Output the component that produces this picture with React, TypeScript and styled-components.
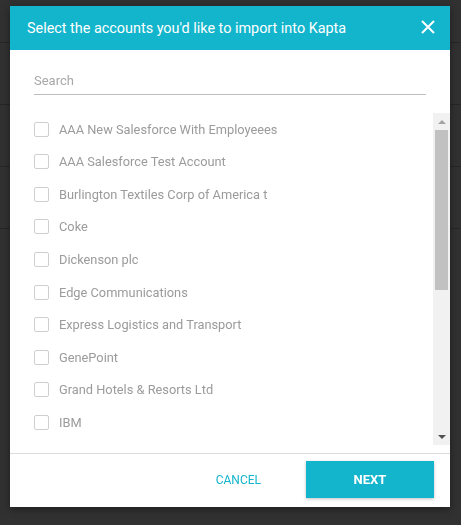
import React from 'react';
import styled, { createGlobalStyle } from 'styled-components';

const teal = '#13b5cc';

const GlobalStyle = createGlobalStyle`
  html, body {
    margin: 0;
    padding: 0;
    background: #313131;
    font-family: Roboto, 'Liberation Sans', Arial, sans-serif;
  }
  * {
    box-sizing: border-box;
  }
`;

const accounts = [
  'AAA New Salesforce With Employeees',
  'AAA Salesforce Test Account',
  'Burlington Textiles Corp of America t',
  'Coke',
  'Dickenson plc',
  'Edge Communications',
  'Express Logistics and Transport',
  'GenePoint',
  'Grand Hotels & Resorts Ltd',
  'IBM',
  'Pyramid Construction Inc.',
  'Sample Account for Entitlements',
  'United Oil & Gas Corp.',
  'United Oil & Gas, Singapore',
  'United Oil & Gas, UK',
  'University of Arizona',
  'sForce',
  'Test Account 2',
];

const App = (): JSX.Element => {
  return (
    <>
      <GlobalStyle />
      <Page>
        <PageBar />
        <PageRow />
        <PageRow />
        <PageRow />
      </Page>
      <Dialog>
        <Header>
          <Title>Select the accounts you'd like to import into Kapta</Title>
          <CloseButton aria-label="Close">
            <svg width="14" height="14" viewBox="0 0 14 14">
              <path d="M1 1 L13 13 M13 1 L1 13" stroke="#fff" strokeWidth="2" />
            </svg>
          </CloseButton>
        </Header>
        <SearchWrap>
          <SearchInput placeholder="Search" />
        </SearchWrap>
        <ListArea>
          <List>
            {accounts.map((name) => (
              <Row key={name}>
                <Check />
                <Label>{name}</Label>
              </Row>
            ))}
          </List>
          <ScrollTrack>
            <ScrollArrow $dir="up" />
            <ScrollThumbRail>
              <ScrollThumb />
            </ScrollThumbRail>
            <ScrollArrow $dir="down" />
          </ScrollTrack>
        </ListArea>
        <Footer>
          <CancelButton>Cancel</CancelButton>
          <NextButton>Next</NextButton>
        </Footer>
      </Dialog>
    </>
  );
};

export default App;

const Page = styled.div`
  height: 525px;
  display: flex;
  flex-direction: column;
`;

const PageBar = styled.div`
  height: 43px;
  border-bottom: 1px solid #262626;
`;

const PageRow = styled.div`
  height: 62px;
  border-bottom: 1px solid #262626;
`;

const Dialog = styled.div`
  position: fixed;
  left: 10px;
  top: 6px;
  width: 440px;
  height: 501px;
  background: #fff;
  display: flex;
  flex-direction: column;
  box-shadow: 0 2px 8px rgba(0, 0, 0, 0.4);
`;

const Header = styled.div`
  height: 44px;
  background: ${teal};
  display: flex;
  align-items: center;
  justify-content: space-between;
  padding: 0 14px 0 17px;
`;

const Title = styled.h2`
  margin: 0;
  color: #fff;
  font-size: 14.4px;
  font-weight: 400;
  letter-spacing: 0;
`;

const CloseButton = styled.button`
  border: none;
  background: transparent;
  padding: 0;
  width: 16px;
  height: 16px;
  display: flex;
  align-items: center;
  justify-content: center;
  margin-top: -2px;
`;

const SearchWrap = styled.div`
  padding: 16px 24px 18px 24px;
`;

const SearchInput = styled.input`
  width: 100%;
  height: 29px;
  border: none;
  border-bottom: 1px solid #bdbdbd;
  outline: none;
  padding: 0;
  font-family: Roboto, 'Liberation Sans', Arial, sans-serif;
  font-size: 13px;
  color: #555;
  &::placeholder {
    color: #a8a8a8;
  }
`;

const ListArea = styled.div`
  height: 332px;
  display: flex;
`;

const List = styled.div`
  flex: 1;
  overflow: hidden;
  padding-left: 24px;
`;

const Row = styled.div`
  height: 32.55px;
  display: flex;
  align-items: center;
`;

const Check = styled.span`
  width: 15px;
  height: 15px;
  border: 1px solid #cfcfcf;
  border-radius: 2px;
  margin-right: 10px;
  flex-shrink: 0;
`;

const Label = styled.span`
  font-size: 12.8px;
  color: #9b9b9b;
  white-space: nowrap;
`;

const ScrollTrack = styled.div`
  width: 17px;
  background: #f1f1f1;
  display: flex;
  flex-direction: column;
`;

const ScrollArrow = styled.div<{ $dir: 'up' | 'down' }>`
  height: 17px;
  display: flex;
  align-items: center;
  justify-content: center;
  &::before {
    content: '';
    width: 0;
    height: 0;
    border-left: 4px solid transparent;
    border-right: 4px solid transparent;
    ${(p) =>
      p.$dir === 'up'
        ? 'border-bottom: 4px solid #a3a3a3;'
        : 'border-top: 4px solid #505050;'}
  }
`;

const ScrollThumbRail = styled.div`
  flex: 1;
  padding: 0 2px;
`;

const ScrollThumb = styled.div`
  height: 160px;
  background: #c1c1c1;
`;

const Footer = styled.div`
  margin-top: 8px;
  border-top: 1px solid #dcdcdc;
  flex: 1;
  display: flex;
  align-items: center;
  justify-content: flex-end;
  padding: 0 16px 0 0;
`;

const CancelButton = styled.button`
  border: none;
  background: transparent;
  color: ${teal};
  font-family: Roboto, 'Liberation Sans', Arial, sans-serif;
  font-size: 12px;
  text-transform: uppercase;
  padding: 0;
  margin-right: 45px;
  margin-top: -2px;
`;

const NextButton = styled.button`
  width: 128px;
  height: 37px;
  border: none;
  background: ${teal};
  color: #fff;
  font-family: Roboto, 'Liberation Sans', Arial, sans-serif;
  font-size: 13px;
  font-weight: 700;
  text-transform: uppercase;
  box-shadow: 0 1px 3px rgba(0, 0, 0, 0.25);
  margin-top: -3px;
`;
